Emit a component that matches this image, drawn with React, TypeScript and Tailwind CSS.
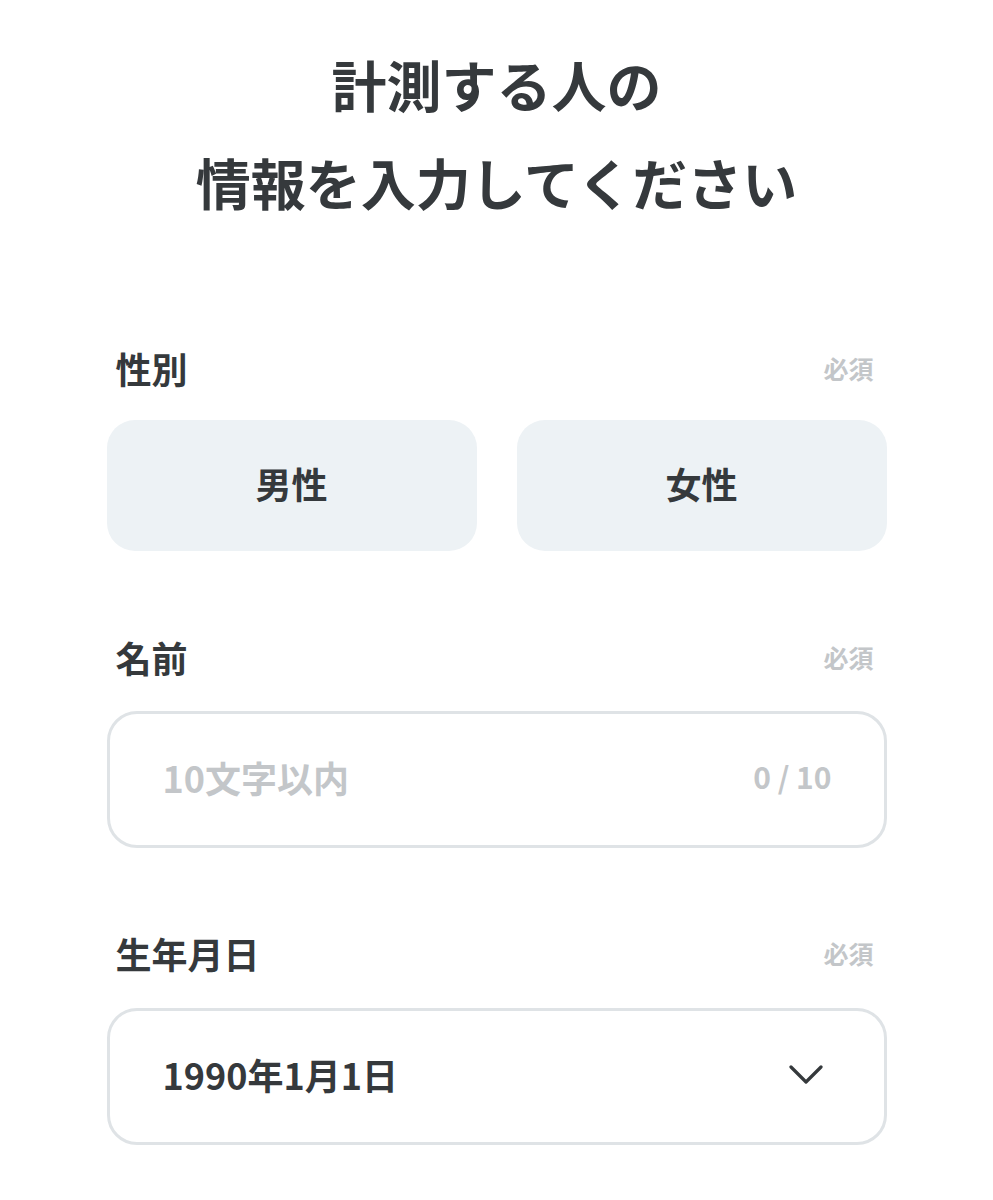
const font = { fontFamily: '"Noto Sans CJK JP", "Noto Sans", sans-serif' };

function FieldLabel({ label }: { label: string }) {
  return (
    <div className="flex items-center justify-between pl-[9px] pr-[13px]">
      <span className="text-[36px] leading-[40px] font-bold text-[#35393c]">{label}</span>
      <span className="text-[25px] leading-[40px] font-bold text-[#c3c6c9]">必須</span>
    </div>
  );
}

function ChevronDown() {
  return (
    <svg width="34" height="22" viewBox="0 0 34 22" fill="none" aria-hidden>
      <path d="M2 3L17 18L32 3" stroke="#35393c" strokeWidth="3.2" strokeLinecap="round" strokeLinejoin="round" />
    </svg>
  );
}

export default function App() {
  return (
    <div className="min-h-[1200px] bg-white" style={font}>
      <div className="mx-auto w-[780px] pt-[34px]">
        <h1 className="text-center text-[55px] leading-[98px] font-bold text-[#35393c]">
          計測する人の
          <br />
          情報を入力してください
        </h1>

        <section className="mt-[118px]">
          <FieldLabel label="性別" />
          <div className="mt-[32px] grid grid-cols-2 gap-[40px]">
            {["男性", "女性"].map((g) => (
              <button
                key={g}
                className="flex h-[131px] items-center justify-center rounded-[28px] bg-[#edf2f5] pb-[6px] text-[36px] font-bold text-[#35393c]"
              >
                {g}
              </button>
            ))}
          </div>
        </section>

        <section className="mt-[86px]">
          <FieldLabel label="名前" />
          <div className="mt-[34px] flex h-[137px] items-center justify-between rounded-[30px] border-[3px] border-[#dfe3e6] pb-[6px] pl-[53px] pr-[52px]">
            <span className="text-[36px] font-bold text-[#c3c6c9]">10文字以内</span>
            <span className="text-[30px] font-bold text-[#c3c6c9]">0 / 10</span>
          </div>
        </section>

        <section className="mt-[85px]">
          <FieldLabel label="生年月日" />
          <div className="mt-[35px] flex h-[137px] items-center justify-between rounded-[30px] border-[3px] border-[#dfe3e6] pb-[4px] pl-[53px] pr-[61px]">
            <span className="-mt-[2px] text-[36px] font-bold text-[#35393c]">1990年1月1日</span>
            <ChevronDown />
          </div>
        </section>
      </div>
    </div>
  );
}
